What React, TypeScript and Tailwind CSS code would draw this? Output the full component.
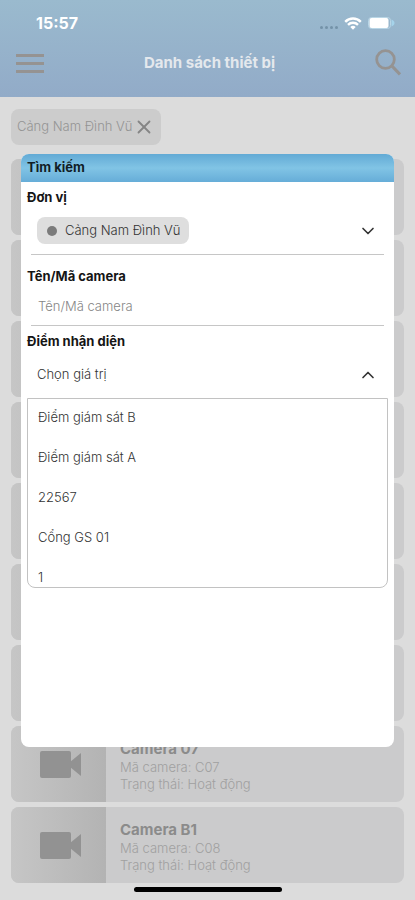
import React, { useState } from 'react';
import { ChevronDown, ChevronUp, X } from 'lucide-react';

interface Camera {
  id: number;
  name?: string;
  code?: string;
  status?: string;
}

const CAMERAS: Camera[] = [
  { id: 1 },
  { id: 2 },
  { id: 3 },
  { id: 4 },
  { id: 5 },
  { id: 6 },
  { id: 7 },
  { id: 8, name: 'Camera 07', code: 'C07', status: 'Hoạt động' },
  { id: 9, name: 'Camera B1', code: 'C08', status: 'Hoạt động' },
];

const POINTS = ['Điểm giám sát B', 'Điểm giám sát A', '22567', 'Cổng GS 01', '1'];

const StatusBar: React.FC = () => (
  <div className="flex h-[46px] items-center justify-between pl-9 pr-5 text-white">
    <span className="text-base font-bold">15:57</span>
    <div className="flex items-center gap-1.5">
      <div className="flex gap-[2px] pt-2">
        <span className="size-[3px] rounded-full bg-[#7492a8]" />
        <span className="size-[3px] rounded-full bg-[#7492a8]" />
        <span className="size-[3px] rounded-full bg-[#7492a8]" />
        <span className="size-[3px] rounded-full bg-[#7492a8]" />
      </div>
      <svg width="18" height="13" viewBox="0 0 18 13" fill="none" stroke="currentColor" strokeWidth="2.4" aria-hidden="true">
        <path d="M1.2 4.8a11 11 0 0 1 15.6 0" />
        <path d="M4 7.9a7 7 0 0 1 10 0" />
        <path d="M9 12.8 6.3 10.1a3.8 3.8 0 0 1 5.4 0z" fill="currentColor" stroke="none" />
      </svg>
      <svg width="27" height="12" viewBox="0 0 27 12" aria-hidden="true">
        <rect x="0.5" y="0.5" width="22" height="11" rx="3" fill="none" stroke="#b9d6e6" />
        <rect x="1.5" y="1" width="19" height="10" rx="2" fill="currentColor" />
        <path d="M23.5 2.5c2 .8 3 2 3 3.5s-1 2.700-3 3.500z" fill="#a5d3ea" />
      </svg>
    </div>
  </div>
);

const CameraCard: React.FC<{ camera: Camera }> = ({ camera }) => (
  <li className="flex h-[76px] overflow-hidden rounded-lg bg-[#cbcbcc]">
    <div className="flex w-[95px] items-center justify-center bg-linear-to-r from-[#c6c6c6] to-[#b3b3b3] pl-1">
      {camera.name && (
        <svg width="41" height="27" viewBox="0 0 41 27" fill="#929292" aria-hidden="true">
          <rect width="31" height="27" rx="2" />
          <path d="M30 11 41 2v23L30 16z" />
        </svg>
      )}
    </div>
    {camera.name && (
      <div className="flex flex-col justify-center pt-1 pl-[14px]">
        <h2 className="text-[15px] leading-5 font-bold text-[#8b8b8b]">{camera.name}</h2>
        <p className="text-[13px] leading-[17px] font-light text-[#a0a0a0]">Mã camera: {camera.code}</p>
        <p className="text-[13px] leading-[17px] font-light text-[#a0a0a0]">Trạng thái: {camera.status}</p>
      </div>
    )}
  </li>
);

const SearchDialog: React.FC = () => {
  const [open, setOpen] = useState(true);
  const [point, setPoint] = useState('Chọn giá trị');

  return (
    <section
      role="dialog"
      aria-labelledby="search-title"
      className="flex-1 overflow-hidden rounded-lg bg-white text-[13px] font-light text-[#333]"
    >
      <h2
        id="search-title"
        className="flex h-7 items-center bg-linear-to-b from-[#62aad5] via-[#81c4e5] to-[#66add8] px-1.5 font-bold text-[#111d26]"
      >
        Tìm kiếm
      </h2>

      <div className="px-1.5 pt-[5px]">
        <span id="unit-label" className="block leading-5 font-bold text-[#151515]">Đơn vị</span>
        <button
          type="button"
          aria-labelledby="unit-label"
          className="mx-1 flex h-12 w-[calc(100%-8px)] items-center justify-between border-b border-[#c6c6c6] px-1.5"
        >
          <span className="flex h-[27px] items-center gap-2 rounded-lg bg-[#dedede] pr-2 pl-2.5">
            <span className="size-2.5 rounded-full bg-[#7b7b7b]" />
            Cảng Nam Đình Vũ
          </span>
          <ChevronDown size={20} strokeWidth={2} />
        </button>

        <label htmlFor="camera-name" className="mt-[11px] block leading-5 font-bold text-[#151515]">
          Tên/Mã camera
        </label>
        <input
          id="camera-name"
          type="text"
          placeholder="Tên/Mã camera"
          className="mx-1 block h-10 w-[calc(100%-8px)] border-b border-[#c6c6c6] px-[7px] outline-none placeholder:text-[#868686]"
        />

        <span id="point-label" className="mt-[5px] block leading-5 font-bold text-[#151515]">Điểm nhận diện</span>
        <button
          type="button"
          aria-labelledby="point-label"
          aria-expanded={open}
          onClick={() => setOpen(!open)}
          className="flex h-[47px] w-full items-center justify-between px-2.5"
        >
          {point}
          {open ? <ChevronUp size={20} strokeWidth={2} /> : <ChevronDown size={20} strokeWidth={2} />}
        </button>
        {open && (
          <ul
            role="listbox"
            aria-labelledby="point-label"
            className="h-[190px] overflow-hidden rounded-b-lg border border-[#c2c2c2]"
          >
            {POINTS.map((item) => (
              <li
                key={item}
                role="option"
                aria-selected={item === point}
                onClick={() => {
                  setPoint(item);
                  setOpen(false);
                }}
                className="flex h-10 items-center px-2.5 pb-0.5"
              >
                {item}
              </li>
            ))}
          </ul>
        )}
      </div>
    </section>
  );
};

export default function App() {
  return (
    <div className="relative min-h-screen bg-[#dcdcdc] pb-[17px] font-['Inter',sans-serif]">
      <header className="h-[97px] bg-linear-to-b from-[#9abace] to-[#92abc8]">
        <StatusBar />
        <div className="flex h-[34px] items-center justify-between pr-3.5 pl-4">
          <button type="button" aria-label="Menu" className="flex flex-col gap-[5px]">
            <span className="h-[3px] w-7 bg-[#959392]" />
            <span className="h-[3px] w-7 bg-[#959392]" />
            <span className="h-[3px] w-7 bg-[#959392]" />
          </button>
          <h1 className="text-[15px] font-bold text-[#e4e8ed]">Danh sách thiết bị</h1>
          <button type="button" aria-label="Tìm kiếm" className="text-[#959392]">
            <svg width="26" height="28" viewBox="0 0 26 28" fill="none" stroke="currentColor" strokeWidth="2.8" aria-hidden="true">
              <circle cx="10.500" cy="10.500" r="8.800" />
              <path d="M16.500 16.500 25 25.500" strokeWidth="3.2" />
            </svg>
          </button>
        </div>
      </header>

      <main className="px-[11px] pt-3">
        <button
          type="button"
          aria-label="Bỏ lọc Cảng Nam Đình Vũ"
          className="flex h-9 items-center rounded-lg bg-[#cccccc] px-1.5 text-[13px] font-light text-[#949494]"
        >
          Cảng Nam Đình Vũ
          <X size={22} strokeWidth={2} className="text-[#858585]" />
        </button>

        <ul className="mt-[14px] flex flex-col gap-[5px]">
          {CAMERAS.map((camera) => (
            <CameraCard key={camera.id} camera={camera} />
          ))}
        </ul>
      </main>

      {/* Search popup over the device list */}
      <div className="absolute inset-0 flex px-[21px] pt-[154px] pb-[153px]">
        <SearchDialog />
      </div>

      <div className="absolute inset-x-0 bottom-2 mx-auto h-[5px] w-[148px] rounded-full bg-black" />
    </div>
  );
}
